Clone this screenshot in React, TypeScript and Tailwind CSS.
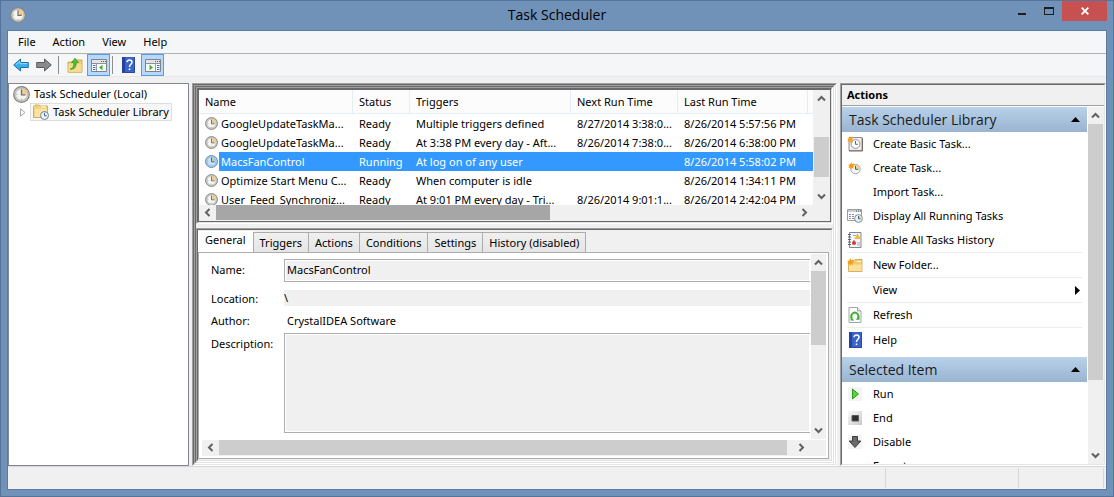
import type { ReactNode } from "react"

type TTask = {
    name: string
    status: string
    triggers: string
    next: string
    last: string
}

type TAction = {
    label: string
    icon?: ReactNode
    submenu?: boolean
    separator?: boolean
}

const tasks: TTask[] = [
    { name: "GoogleUpdateTaskMa...", status: "Ready", triggers: "Multiple triggers defined", next: "8/27/2014 3:38:0...", last: "8/26/2014 5:57:56 PM" },
    { name: "GoogleUpdateTaskMa...", status: "Ready", triggers: "At 3:38 PM every day - Aft...", next: "8/26/2014 7:38:0...", last: "8/26/2014 6:38:00 PM" },
    { name: "MacsFanControl", status: "Running", triggers: "At log on of any user", next: "", last: "8/26/2014 5:58:02 PM" },
    { name: "Optimize Start Menu C...", status: "Ready", triggers: "When computer is idle", next: "", last: "8/26/2014 1:34:11 PM" },
    { name: "User_Feed_Synchroniz...", status: "Ready", triggers: "At 9:01 PM every day - Tri...", next: "8/26/2014 9:01:1...", last: "8/26/2014 2:42:04 PM" },
]

const tabs = ["General", "Triggers", "Actions", "Conditions", "Settings", "History (disabled)"]

function Clock({ className = "size-4", blue = false }: { className?: string; blue?: boolean }) {
    return (
        <svg viewBox="0 0 16 16" className={className}>
            <circle cx="8" cy="8" r="7.4" fill={blue ? "#a9cdee" : "#c9c9c6"} stroke={blue ? "#5d86ad" : "#84847f"} strokeWidth="1.1" />
            <circle cx="8" cy="8" r="5.5" fill={blue ? "#c9e1f6" : "#f4f4f1"} stroke={blue ? "#86aed3" : "#b1b1ad"} strokeWidth=".7" />
            <path d="M8 8V2.6A5.4 5.4 0 0 1 13.4 8Z" fill={blue ? "#b4cdb9" : "#f3cf8b"} />
            <path d="M8 3.2V8.4H11.8" fill="none" stroke={blue ? "#3d6a96" : "#66717c"} strokeWidth="1.2" />
            <path d="M3.2 8h1M8 12v1" stroke="#8d9aa5" strokeWidth=".8" />
        </svg>
    )
}

function Arrow({ right = false }: { right?: boolean }) {
    return (
        <svg viewBox="0 0 16 14" className="h-3.5 w-4">
            {right ? (
                <path d="M.7 4.5H8.5V1L15.3 7 8.5 13V9.5H.7Z" fill="#8b8b8b" stroke="#5c5c5c" />
            ) : (
                <>
                    <path d="M15.3 4.5H7.5V1L.7 7 7.5 13V9.5H15.3Z" fill="#3cb0ee" stroke="#1b6fb5" />
                    <path d="M14.5 5.6H6.8V3.2L3 6.6" fill="none" stroke="#93dafb" />
                </>
            )}
        </svg>
    )
}

function FolderUp() {
    return (
        <svg viewBox="0 0 16 16" className="size-4">
            <path d="M1 5h5l1-2h8v12.3H1Z" fill="#f0cf78" stroke="#c79f45" strokeWidth=".8" />
            <path d="M1.5 7h13v7.8h-13Z" fill="#f8dc92" />
            <path d="M3 12C6.500 11.500 6.800 8.500 6.800 5.500H4.500L8 1.200l3.500 4.300H9.300C9.300 10 7.500 12.800 3 12Z" fill="#4cc32c" stroke="#26861a" strokeWidth=".6" />
        </svg>
    )
}

function PaneIcon({ right = false }: { right?: boolean }) {
    return (
        <svg viewBox="0 0 16 13" className="h-[13px] w-4">
            <path d="M.5.5h15v12H.5Z" fill="#fafafa" stroke="#7f8286" />
            <path d="M1 1h14v3H1Z" fill="#e2e4e6" />
            <path d="M1 4.500h14" stroke="#8e9195" />
            <path d="M10 2.500h1M12 2.500h1M14 2.500h1" stroke="#55585c" />
            {right ? (
                <>
                    <path d="M10.500 5v7" stroke="#9a9da0" />
                    <path d="M12 6.500h2.500M12 8.500h2.500M12 10.500h2.500" stroke="#3f74b4" />
                    <path d="M4.500 5.800v5.400L8 8.500Z" fill="#37b525" />
                </>
            ) : (
                <>
                    <path d="M5.500 5v7" stroke="#9a9da0" />
                    <path d="M2 6.500h2.500M2 8.500h2.500M2 10.500h2.500" stroke="#3f74b4" />
                    <path d="M11.500 5.800v5.400L8 8.500Z" fill="#37b525" />
                </>
            )}
        </svg>
    )
}

function HelpIcon() {
    return (
        <svg viewBox="0 0 13 16" className="h-4 w-[13px]">
            <path d="M0 0h13v16H0Z" fill="#3a63c8" />
            <path d="M0 0h3v16H0Z" fill="#2443a0" />
            <path d="M12.500 0v15.500H0" fill="none" stroke="#2a489c" />
            <path d="M5 5.300C5 2.300 10 2.300 10 5.300 10 7.300 7.500 7.300 7.500 10" fill="none" stroke="#fff" strokeWidth="1.500" />
            <path d="M6.700 11.500h1.600v1.600H6.700Z" fill="#fff" />
        </svg>
    )
}

function LibraryIcon() {
    return (
        <svg viewBox="0 0 16 16" className="size-4">
            <path d="M.500 13.500V2.500L2 1h4l1 1h7.500v11.500Z" fill="#f3d27e" stroke="#caa24c" strokeWidth=".8" />
            <path d="M2 5h12v8H2Z" fill="#fbe3a2" />
            <path d="M8 3h5" stroke="#fff" />
            <circle cx="11.500" cy="11.500" r="4" fill="#eef4f8" stroke="#6f8496" />
            <path d="M11.500 8.800v3h2.300" fill="none" stroke="#3c6a9a" />
        </svg>
    )
}

const star = "M4 0l1 2.600L7.600 1.500 6.400 4 9 5 6.400 6 7.200 8.500 4.700 7.200 3.600 9.300 2.800 6.800.400 7.400 1.600 5 0 3.400 2.600 3Z"

function BasicTaskIcon() {
    return (
        <svg viewBox="0 0 16 16" className="size-4">
            <path d="M2 1.500h13v13H2Z" fill="#efeeee" stroke="#9c8d89" />
            <path d="M2 15h13.500V2" fill="none" stroke="#7c6c66" />
            <circle cx="8.500" cy="8" r="4.400" fill="#fff" stroke="#8c98a2" />
            <path d="M8.500 5v3.300h2.400" fill="none" stroke="#4a6a8c" />
            <path d={star} transform="scale(.8)" fill="#f5a623" />
        </svg>
    )
}

function CreateTaskIcon() {
    return (
        <svg viewBox="0 0 16 16" className="size-4">
            <circle cx="8.500" cy="9" r="4.700" fill="#f3f4f4" stroke="#a3abb1" />
            <path d="M8.500 9V4.800A4.200 4.200 0 0 1 12.700 9Z" fill="#f5d289" />
            <path d="M8.500 5.800V9.300h2.800" fill="none" stroke="#4a5c6c" />
            <path d={star} transform="translate(1 2) scale(.8)" fill="#f39c12" />
        </svg>
    )
}

function RunningIcon() {
    return (
        <svg viewBox="0 0 16 16" className="size-4">
            <path d="M.500 1.500h14v11H.500Z" fill="#fcfcfc" stroke="#9a9da0" />
            <path d="M1 2h13v2H1Z" fill="#c9ccd0" />
            <path d="M9 3h1M11 3h1M13 3h1" stroke="#55585c" />
            <path d="M2 6.500h2M5 6.500h2M2 8.500h2M5 8.500h2M2 10.500h2M5 10.500h2" stroke="#8b8e92" />
            <circle cx="11.500" cy="10.500" r="3.900" fill="#e9f1f6" stroke="#7e8d99" />
            <path d="M11.500 10.500V7.200a3.300 3.300 0 0 1 3.300 3.300Z" fill="#f5d289" />
            <path d="M11.500 8v2.800h2" fill="none" stroke="#31679c" />
        </svg>
    )
}

function HistoryIcon() {
    return (
        <svg viewBox="0 0 16 16" className="size-4">
            <path d="M2.500.500h11.500v15H2.500Z" fill="#f4f6f8" stroke="#7f878f" />
            <path d="M1 2.500h3M1 5h3M1 7.500h3M1 10h3M1 12.500h3" stroke="#5e656c" />
            <path d="M6 3.500h3M6 8.500h2M10 11h3M10 13h3" stroke="#8fb0cf" />
            <path d="M8 6.500l2.500-4.500 2.500 4.500Z" fill="#f6c21c" stroke="#d49b10" strokeWidth=".5" />
            <circle cx="7" cy="11" r="2" fill="#d8362a" />
        </svg>
    )
}

function NewFolderIcon() {
    return (
        <svg viewBox="0 0 16 16" className="size-4">
            <path d="M1.500 14.500V5L3 3.500h4l1-1h7v12Z" fill="#f0cb72" stroke="#cfa54a" strokeWidth=".8" />
            <path d="M2 7.500h12.600V14H2Z" fill="#fae09a" />
            <path d="M10 4.500h4" stroke="#fff" />
            <path d={star} transform="translate(0 1) scale(.85)" fill="#f5a01a" />
        </svg>
    )
}

function RefreshIcon() {
    return (
        <svg viewBox="0 0 16 16" className="size-4">
            <path d="M2 .500h8.500L14 4v11.500H2Z" fill="#fbfbfb" stroke="#a3a6a9" />
            <path d="M10.500.500V4H14" fill="#e4e6e8" stroke="#a3a6a9" />
            <path d="M5.200 11.500A3.500 3.500 0 1 1 10.800 11" fill="none" stroke="#3fae2f" strokeWidth="1.800" />
            <path d="M3.600 9.700v3.800h3.600ZM12.500 8.800v4H8.700Z" fill="#3fae2f" />
        </svg>
    )
}

function RunIcon() {
    return (
        <svg viewBox="0 0 14 14" className="size-3.5">
            <path d="M0 0h14v14H0Z" fill="#f4f4f4" />
            <path d="M4.500 2v10L10.500 7Z" fill="#5ad23a" stroke="#2f9a1f" />
        </svg>
    )
}

function EndIcon() {
    return (
        <svg viewBox="0 0 14 14" className="size-3.5">
            <defs>
                <linearGradient id="end-face" x1="0" y1="0" x2="1" y2="1">
                    <stop offset="0" stopColor="#fafafa" />
                    <stop offset="1" stopColor="#c8c8c8" />
                </linearGradient>
            </defs>
            <path d="M0 0h14v14H0Z" fill="url(#end-face)" />
            <path d="M4 4.500h6.500v5.500H4Z" fill="#2f2f2f" stroke="#5b5b5b" />
        </svg>
    )
}

function DisableIcon() {
    return (
        <svg viewBox="0 0 14 14" className="size-3.5">
            <path d="M0 0h14v14H0Z" fill="#f4f4f4" />
            <path d="M4.500 1.500h5V6h3.300L7 12.500 1.200 6h3.300Z" fill="#6a6a6a" stroke="#3f3f3f" />
        </svg>
    )
}

const libraryActions: TAction[] = [
    { label: "Create Basic Task...", icon: <BasicTaskIcon /> },
    { label: "Create Task...", icon: <CreateTaskIcon /> },
    { label: "Import Task..." },
    { label: "Display All Running Tasks", icon: <RunningIcon /> },
    { label: "Enable All Tasks History", icon: <HistoryIcon />, separator: true },
    { label: "New Folder...", icon: <NewFolderIcon />, separator: true },
    { label: "View", submenu: true, separator: true },
    { label: "Refresh", icon: <RefreshIcon />, separator: true },
    { label: "Help", icon: <HelpIcon /> },
]

const itemActions: TAction[] = [
    { label: "Run", icon: <RunIcon /> },
    { label: "End", icon: <EndIcon /> },
    { label: "Disable", icon: <DisableIcon /> },
    { label: "Export..." },
]

const chevrons = {
    up: "M1 6.500 4.500 3 8 6.500",
    down: "M1 2.500 4.500 6 8 2.500",
    left: "M6.500 1 3 4.500 6.500 8",
    right: "M2.500 1 6 4.500 2.500 8",
}

function ScrollButton({ dir }: { dir: keyof typeof chevrons }) {
    const size = dir === "up" || dir === "down" ? "h-[17px] w-[15px]" : "h-[15px] w-[17px]"

    return (
        <button type="button" aria-label={`Scroll ${dir}`} className={`flex shrink-0 items-center justify-center bg-[#f0f0f0] ${size}`}>
            <svg viewBox="0 0 9 9" className="size-[9px]">
                <path d={chevrons[dir]} fill="none" stroke="#606060" strokeWidth="2" />
            </svg>
        </button>
    )
}

// classic sunken 3D edge, two pixels wide
function Sunken({ className = "", children }: { className?: string; children: ReactNode }) {
    return (
        <div className={`flex min-h-0 min-w-0 border border-t-[#a0a0a0] border-r-white border-b-white border-l-[#a0a0a0] ${className}`}>
            <div className="flex min-h-0 min-w-0 flex-1 flex-col border border-t-[#696969] border-r-[#e3e3e3] border-b-[#e3e3e3] border-l-[#696969]">
                {children}
            </div>
        </div>
    )
}

function TitleBar() {
    return (
        <header className="grid h-[29px] shrink-0 grid-cols-[1fr_auto_1fr]">
            <div className="pt-1.5 pl-[9px]">
                <Clock />
            </div>
            <h1 className="pt-1 font-['Open_Sans',sans-serif] text-[14px] leading-5">Task Scheduler</h1>
            <div className="flex items-start justify-end pr-[6px]">
                <button type="button" aria-label="Minimize" className="flex h-[19px] w-[26px] items-center justify-center pt-1.5">
                    <span className="h-0.5 w-2 bg-[#1d1d1f]" />
                </button>
                <button type="button" aria-label="Maximize" className="flex h-[19px] w-[27px] items-center justify-center">
                    <span className="h-2 w-2.5 border border-t-2 border-[#1d1d1f]" />
                </button>
                <button type="button" aria-label="Close" className="flex h-5 w-[45px] items-center justify-center bg-[#c75050]">
                    <svg viewBox="0 0 8 8" className="size-2">
                        <path d="M.700.700 7.300 7.300M7.300.700.700 7.300" stroke="#fff" strokeWidth="1.800" />
                    </svg>
                </button>
            </div>
        </header>
    )
}

function Toolbar() {
    return (
        <div className="flex h-[23px] shrink-0 items-center border-b border-[#e8e8e8] bg-[#f5f6f7] pl-[5px]">
            <button type="button" aria-label="Back"><Arrow /></button>
            <button type="button" aria-label="Forward" className="ml-[7px]"><Arrow right /></button>
            <span className="ml-1.5 h-[18px] w-px bg-[#8d8d8d]" />
            <button type="button" aria-label="Up one level" className="ml-2"><FolderUp /></button>
            <button type="button" aria-label="Show console tree" className="ml-1 flex h-[22px] w-[23px] items-center justify-center border border-[#569de5] bg-[#b8d8f9]">
                <PaneIcon />
            </button>
            <span className="ml-0.5 h-[18px] w-px bg-[#8d8d8d]" />
            <button type="button" aria-label="Help" className="ml-[9px]"><HelpIcon /></button>
            <button type="button" aria-label="Show action pane" className="ml-1.5 flex h-[22px] w-[23px] items-center justify-center border border-[#569de5] bg-[#b8d8f9]">
                <PaneIcon right />
            </button>
        </div>
    )
}

function Tree() {
    return (
        <nav className="w-[181px] shrink-0 border border-[#828790] bg-white pt-px pl-1">
            <div className="flex h-[18px] items-center gap-1">
                <Clock className="size-[17px]" />
                <span>Task Scheduler (Local)</span>
            </div>
            <div className="flex h-[18px] items-center">
                <svg viewBox="0 0 6 9" className="ml-[7px] h-[9px] w-1.5">
                    <path d="M.600.900v7.200L5 4.500Z" fill="#fff" stroke="#a2a2a2" />
                </svg>
                <button type="button" className="ml-1 flex h-[18px] items-center gap-1 border border-[#dedede] bg-[#f7f7f7] px-0.5">
                    <LibraryIcon />
                    Task Scheduler Library
                </button>
            </div>
        </nav>
    )
}

function TaskList() {
    const head = "border-r border-b border-[#e3ecf8] pl-1.5 text-left font-normal"
    const cell = "overflow-hidden p-0 pl-1.5"

    return (
        <div className="flex h-[133px] shrink-0 flex-col border border-[#696969] bg-[#f0f0f0]">
            <div className="flex h-[115px]">
                <div className="min-w-0 flex-1 overflow-hidden bg-white">
                    <table className="w-full table-fixed border-separate border-spacing-0 whitespace-nowrap">
                        <colgroup>
                            <col className="w-[154px]" />
                            <col className="w-[57px]" />
                            <col className="w-[161px]" />
                            <col className="w-[107px]" />
                            <col className="w-[130px]" />
                            <col />
                        </colgroup>
                        <thead>
                            <tr className="h-6 bg-[#fcfcfc]">
                                <th className={head}>Name</th>
                                <th className={head}>Status</th>
                                <th className={head}>Triggers</th>
                                <th className={head}>Next Run Time</th>
                                <th className={head}>Last Run Time</th>
                                <th className="border-b border-[#e3ecf8]" />
                            </tr>
                        </thead>
                        <tbody>
                            {tasks.map((task, i) => {
                                const selected = task.status === "Running"
                                const fill = selected ? "bg-[#3399ff] text-white" : ""
                                return (
                                    <tr key={i} className="h-[19px]">
                                        <td className="overflow-hidden p-0">
                                            <div className="flex h-[19px] items-center">
                                                <span className="w-5 shrink-0 pl-1.5">
                                                    <Clock className="size-[13px]" blue={selected} />
                                                </span>
                                                <span className={`h-[19px] flex-1 pl-0.5 leading-[19px] ${fill}`}>{task.name}</span>
                                            </div>
                                        </td>
                                        <td className={`${cell} ${fill}`}>{task.status}</td>
                                        <td className={`${cell} ${fill}`}>{task.triggers}</td>
                                        <td className={`${cell} ${fill}`}>{task.next}</td>
                                        <td className={`${cell} ${fill}`}>{task.last}</td>
                                        <td className={`p-0 ${fill}`} />
                                    </tr>
                                )
                            })}
                        </tbody>
                    </table>
                </div>
                <div className="flex w-[17px] shrink-0 flex-col pl-px">
                    <ScrollButton dir="up" />
                    <div className="flex-1 pt-[30px]">
                        <div className="h-10 w-[15px] bg-[#cdcdcd]" />
                    </div>
                    <ScrollButton dir="down" />
                </div>
            </div>
            <div className="flex h-4 pr-[17px]">
                <ScrollButton dir="left" />
                <div className="flex-1">
                    <div className="h-[15px] w-[57.5%] bg-[#a6a6a6]" />
                </div>
                <ScrollButton dir="right" />
            </div>
        </div>
    )
}

function TaskDetails() {
    const row = "grid grid-cols-[73px_1fr]"
    const box = "w-full border border-r-0 border-[#abadb3] bg-[#f0f0f0] px-0.5 shadow-[inset_0_0_0_1px_#fff] outline-none"

    return (
        <div className="flex min-h-0 flex-1 flex-col bg-[#f0f0f0] pr-0.5 pb-px">
            <div role="tablist" className="flex h-[22px] shrink-0 items-end">
                {tabs.map((tab, i) =>
                    i === 0 ? (
                        <button key={tab} type="button" role="tab" aria-selected="true" className="h-[21px] bg-white px-[7px] pb-1">
                            {tab}
                        </button>
                    ) : (
                        <button key={tab} type="button" role="tab" aria-selected="false" className="-mr-px h-5 border border-b-0 border-[#acacac] bg-linear-to-b from-[#f0f0f0] to-[#e5e5e5] px-1.5">
                            {tab}
                        </button>
                    )
                )}
            </div>
            <div className="flex min-h-0 flex-1 flex-col border border-[#acacac] bg-white pr-0.5 pb-0.5">
                <div className="flex min-h-0 flex-1">
                    <form className="min-w-0 flex-1 overflow-hidden pt-1.5 pr-px pl-3">
                        <div className={row}>
                            <label htmlFor="task-name" className="pt-[3px]">Name:</label>
                            <input id="task-name" readOnly defaultValue="MacsFanControl" className={`${box} h-[23px] pb-0.5`} />
                        </div>
                        <div className={`${row} mt-[7px] h-4 items-center`}>
                            <label htmlFor="task-location" className="pt-0.5">Location:</label>
                            <input id="task-location" readOnly defaultValue={"\\"} className="h-4 w-full bg-[#f0f0f0] outline-none" />
                        </div>
                        <div className={`${row} mt-2 h-4 items-center`}>
                            <span>Author:</span>
                            <span className="pl-[3px]">CrystalIDEA Software</span>
                        </div>
                        <div className={`${row} mt-1`}>
                            <label htmlFor="task-description" className="pt-[3px]">Description:</label>
                            <textarea id="task-description" readOnly className={`${box} block h-[100px] resize-none`} />
                        </div>
                    </form>
                    <div className="mt-px flex w-[15px] shrink-0 flex-col bg-[#f0f0f0]">
                        <ScrollButton dir="up" />
                        <div className="flex-1">
                            <div className="h-[74px] w-[15px] bg-[#cdcdcd]" />
                        </div>
                        <ScrollButton dir="down" />
                    </div>
                </div>
                <div className="mt-px ml-[3px] flex h-4 bg-[#f0f0f0] pr-4">
                    <ScrollButton dir="left" />
                    <div className="flex-1">
                        <div className="h-[15px] w-[99%] bg-[#cdcdcd]" />
                    </div>
                    <ScrollButton dir="right" />
                </div>
            </div>
        </div>
    )
}

function ActionGroup({ title, actions }: { title: string; actions: TAction[] }) {
    return (
        <section className="mb-[5px]">
            <h2 className="flex h-[25px] items-center justify-between bg-linear-to-b from-[#b9d1ea] to-[#99b4d1] px-[7px] font-['Open_Sans',sans-serif] text-[14px] leading-5 text-[#1b1b1b]">
                {title}
                <svg viewBox="0 0 9 5" className="h-[5px] w-[9px]">
                    <path d="M4.500 0 9 5H0Z" />
                </svg>
            </h2>
            <ul>
                {actions.map(action => (
                    <li key={action.label}>
                        <button type="button" className="flex h-6 w-full items-center pr-[7px] pl-[5px] text-left">
                            <span className="mr-2.5 flex w-4 justify-center">{action.icon}</span>
                            <span className="flex-1">{action.label}</span>
                            {action.submenu && (
                                <svg viewBox="0 0 5 9" className="h-[9px] w-[5px]">
                                    <path d="M0 0 5 4.500 0 9Z" />
                                </svg>
                            )}
                        </button>
                        {action.separator && <div className="mx-[5px] h-px bg-[#ececec]" />}
                    </li>
                ))}
            </ul>
        </section>
    )
}

export default function App() {
    return (
        <div className="flex h-screen flex-col overflow-hidden border border-[#56749a] bg-[#7092b9] font-['Noto_Sans',sans-serif] text-[11px] leading-4 text-black">
            <TitleBar />
            <main className="mx-[6px] mb-[6px] flex min-h-0 flex-1 flex-col border border-[#5c7ba1] bg-[#f0f0f0]">
                <nav className="flex h-[23px] shrink-0 items-center gap-px border-b border-[#b0b3b6] bg-[#f5f6f7] pl-0.5">
                    {["File", "Action", "View", "Help"].map(item => (
                        <button key={item} type="button" className="px-2">{item}</button>
                    ))}
                </nav>
                <Toolbar />
                <div className="mt-1.5 flex min-h-0 flex-1">
                    <Tree />
                    <Sunken className="ml-[3px] flex-1">
                        <Sunken className="flex-1">
                            <Sunken className="shrink-0">
                                <TaskList />
                            </Sunken>
                            <Sunken className="mt-1 flex-1">
                                <TaskDetails />
                            </Sunken>
                        </Sunken>
                    </Sunken>
                    <Sunken className="ml-[3px] w-[266px] shrink-0">
                        <div className="h-[21px] shrink-0 border-b border-[#a0a0a0] pl-[5px] leading-5 font-bold">Actions</div>
                        <div className="flex min-h-0 flex-1 bg-white pt-px">
                            <div className="min-w-0 flex-1 overflow-hidden">
                                <ActionGroup title="Task Scheduler Library" actions={libraryActions} />
                                <ActionGroup title="Selected Item" actions={itemActions} />
                            </div>
                            <div className="ml-px flex w-4 shrink-0 flex-col bg-[#f0f0f0]">
                                <ScrollButton dir="up" />
                                <div className="flex-1">
                                    <div className="h-64 w-[15px] bg-[#cdcdcd]" />
                                </div>
                                <ScrollButton dir="down" />
                            </div>
                        </div>
                    </Sunken>
                </div>
                <footer className="flex h-[23px] shrink-0 justify-end border-t border-[#d7d7d7] py-px pr-0.5">
                    <span className="w-[133px] border-l border-[#d7d7d7]" />
                    <span className="w-[86px] border-x border-[#d7d7d7]" />
                </footer>
            </main>
        </div>
    )
}
